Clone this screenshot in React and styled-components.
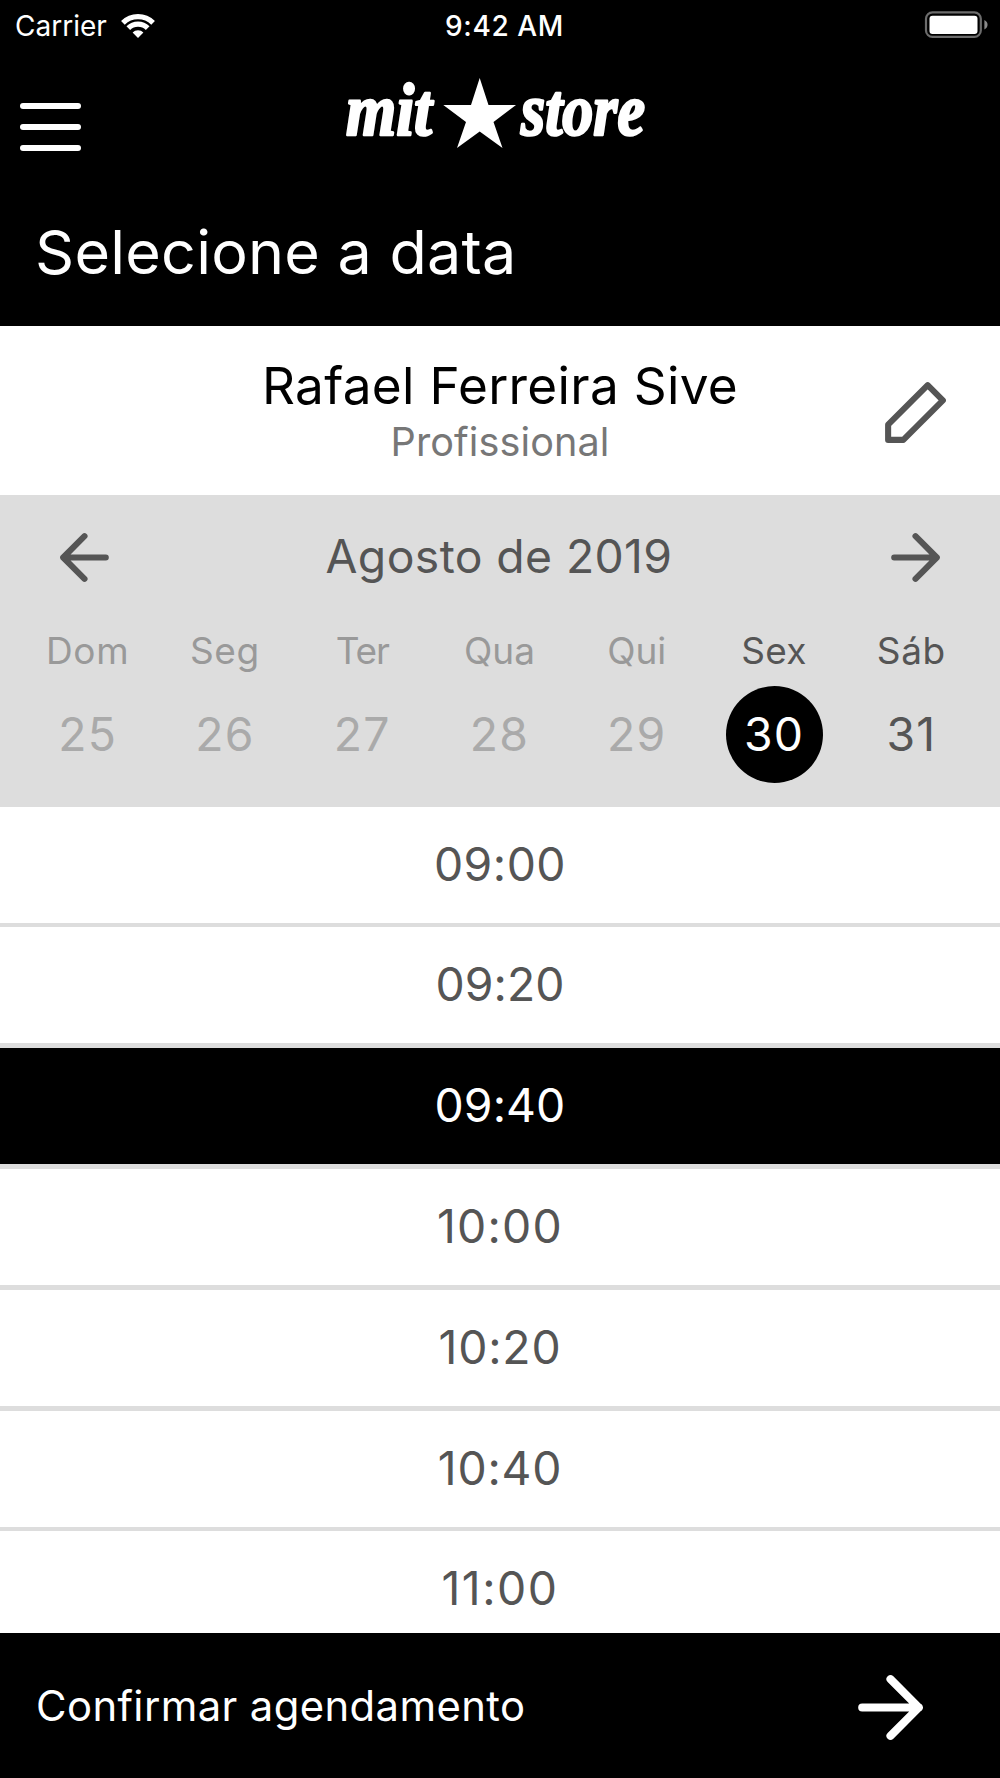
import React, { useState } from 'react'
import styled, { createGlobalStyle } from 'styled-components'

const WEEK = [
  { name: 'Dom', day: 25, disabled: true, tracking: 0.7 },
  { name: 'Seg', day: 26, disabled: true, tracking: 0.6 },
  { name: 'Ter', day: 27, disabled: true, tracking: -1.2 },
  { name: 'Qua', day: 28, disabled: true },
  { name: 'Qui', day: 29, disabled: true },
  { name: 'Sex', day: 30, tracking: 0.3 },
  { name: 'Sáb', day: 31, tracking: 0.7 }
]

const SLOTS = [
  { time: '09:00', tracking: 0.5 },
  { time: '09:20', tracking: 0.1 },
  { time: '09:40', tracking: 0.1 },
  { time: '10:00', tracking: 1.2 },
  { time: '10:20', tracking: 0.8 },
  { time: '10:40', tracking: 0.8 },
  { time: '11:00', tracking: 1.5 }
]

const Arrow = ({ left }) => (
  <path d={left ? 'M19 12H5M12 19l-7-7 7-7' : 'M5 12h14M12 5l7 7-7 7'} />
)

const Wifi = () => (
  <svg width='36' height='26' viewBox='0 0 36 26'>
    <g fill='none' stroke='white' strokeWidth='5.2'>
      <path d='M2.9 9.8A21.4 21.4 0 0 1 33.1 9.8' />
      <path d='M8.3 15.2A13.7 13.7 0 0 1 27.7 15.2' />
    </g>
    <path d='M18 24.9L12.6 19.5A7.6 7.6 0 0 1 23.4 19.5Z' fill='white' />
  </svg>
)

const Battery = () => (
  <svg width='64' height='28' viewBox='0 0 64 28'>
    <rect x='2' y='1.3' width='54.8' height='24.6' rx='6.5' fill='none' stroke='#6c6c6c' strokeWidth='2.2' />
    <rect x='5.5' y='4.8' width='48' height='18.2' rx='3' fill='white' />
    <path d='M60.400 9c4.200 2 4.200 7.400 0 9.400z' fill='#8a8a8a' />
  </svg>
)

const Logo = () => (
  <svg width='330' height='110' viewBox='-10 -14 330 110'>
    <LogoText x='6' y='60.500' textLength='86' lengthAdjust='spacingAndGlyphs'>mit</LogoText>
    <path d='M139.700 4l8.800 27h27.500l-22.500 17 9 26-22.800-16.500L117 74l9-26-22.700-17H131z' fill='white' />
    <LogoText x='181' y='60.500' textLength='124' lengthAdjust='spacingAndGlyphs'>store</LogoText>
  </svg>
)

const App = () => {
  const [day, setDay] = useState(30)
  const [slot, setSlot] = useState('09:40')

  return (
    <Screen>
      <GlobalStyle />
      <Header>
        <StatusBar>
          <Carrier>
            Carrier
            <Wifi />
          </Carrier>
          <Clock>9:42 AM</Clock>
          <Battery />
        </StatusBar>
        <NavBar>
          <Menu aria-label='Menu'>
            <MenuLine />
            <MenuLine />
            <MenuLine />
          </Menu>
          <Logo />
        </NavBar>
        <Title>Selecione a data</Title>
      </Header>

      <Professional>
        <Side />
        <Info>
          <Name>Rafael Ferreira Sive</Name>
          <Role>Profissional</Role>
        </Info>
        <Side>
          <Icon size='73'>
            <path d='M16 3l5 5L8 21H3v-5z' />
          </Icon>
        </Side>
      </Professional>

      <Calendar>
        <MonthBar>
          <Icon size='73'>
            <Arrow left />
          </Icon>
          <Month>Agosto de 2019</Month>
          <Icon size='73'>
            <Arrow />
          </Icon>
        </MonthBar>
        <Week>
          {WEEK.map(item => (
            <Day key={item.name} onClick={() => !item.disabled && setDay(item.day)}>
              <WeekDay $disabled={item.disabled} $tracking={item.tracking}>
                {item.name}
              </WeekDay>
              <DayNumber $disabled={item.disabled} $active={item.day === day}>
                {item.day}
              </DayNumber>
            </Day>
          ))}
        </Week>
      </Calendar>

      <Slots>
        {SLOTS.map(({ time, tracking }) => (
          <Slot key={time} $active={time === slot} $tracking={tracking} onClick={() => setSlot(time)}>
            {time}
          </Slot>
        ))}
      </Slots>

      <Footer>
        Confirmar agendamento
        <Icon size='97' color='white'>
          <Arrow />
        </Icon>
      </Footer>
    </Screen>
  )
}

const GlobalStyle = createGlobalStyle`
  body {
    margin: 0;
    background-color: white;
    font-family: Inter, sans-serif;
  }
  svg {
    display: block;
    flex-shrink: 0;
  }
`
const Screen = styled.div`
  display: flex;
  flex-direction: column;
  width: 1000px;
  height: 1778px;
  overflow: hidden;
`
const Icon = styled.svg.attrs(({ size }) => ({ width: size, height: size, viewBox: '0 0 24 24' }))`
  fill: none;
  stroke: ${({ color }) => color || '#555'};
  stroke-width: 2;
  stroke-linecap: round;
  stroke-linejoin: round;
`
const LogoText = styled.text`
  font-family: 'Liberation Serif', serif;
  font-size: 73px;
  font-weight: bold;
  font-style: italic;
  fill: white;
  stroke: white;
  stroke-width: 2.6px;
  stroke-linejoin: round;
`
const Header = styled.header`
  flex-shrink: 0;
  height: 326px;
  background-color: black;
  color: white;
`
const StatusBar = styled.div`
  display: grid;
  grid-template-columns: 1fr auto 1fr;
  align-items: center;
  height: 50px;
  padding: 0 12px 0 15px;
  font-size: 28px;
  line-height: 34px;
  svg:last-child {
    justify-self: end;
  }
`
const Carrier = styled.div`
  display: flex;
  align-items: center;
  gap: 13px;
  padding-top: 1px;
`
const Clock = styled.div`
  padding: 1px 0 0 6px;
  font-weight: 500;
  letter-spacing: 0.6px;
`
const NavBar = styled.nav`
  display: grid;
  grid-template-columns: 1fr auto 1fr;
  height: 130px;
  padding: 10px 30px 0 20px;
  box-sizing: border-box;
`
const Menu = styled.button`
  display: flex;
  flex-direction: column;
  gap: 15px;
  width: 61px;
  margin: 43px 0 0;
  padding: 0;
  border: none;
  background: none;
`
const MenuLine = styled.span`
  width: 61px;
  height: 6px;
  border-radius: 3px;
  background-color: white;
`
const Title = styled.h1`
  margin: 0;
  padding-left: 35px;
  font-size: 61px;
  font-weight: 400;
  line-height: 144px;
  letter-spacing: 0.25px;
`
const Professional = styled.section`
  display: grid;
  grid-template-columns: 1fr auto 1fr;
  flex-shrink: 0;
  height: 169px;
  padding: 0 48px;
  box-sizing: border-box;
  text-align: center;
`
const Side = styled.div`
  display: flex;
  align-items: center;
  justify-content: flex-end;
  padding-top: 4px;
`
const Info = styled.div`
  padding-top: 31px;
  line-height: 57px;
`
const Name = styled.div`
  color: black;
  font-size: 51.3px;
  letter-spacing: 0.3px;
`
const Role = styled.div`
  color: #777;
  font-size: 39.6px;
  letter-spacing: 0.1px;
`
const Calendar = styled.section`
  flex-shrink: 0;
  height: 311.600px;
  background-color: #ddd;
`
const MonthBar = styled.div`
  display: flex;
  align-items: center;
  justify-content: space-between;
  height: 125.400px;
  padding: 0 48px;
`
const Month = styled.div`
  padding: 0 2px 4px 0;
  color: #555;
  font-size: 46.3px;
  letter-spacing: 0.4px;
`
const Week = styled.div`
  display: grid;
  grid-template-columns: repeat(7, 1fr);
  padding: 0 20px 0 19px;
`
const Day = styled.div`
  display: flex;
  flex-direction: column;
  align-items: center;
  gap: 4.600px;
`
const WeekDay = styled.div`
  padding-top: 1px;
  color: ${({ $disabled }) => ($disabled ? '#999' : '#555')};
  font-size: 37px;
  line-height: 60px;
  letter-spacing: ${({ $tracking = 0 }) => $tracking}px;
`
const DayNumber = styled.div`
  width: 97px;
  height: 97px;
  border-radius: 50%;
  background-color: ${({ $active }) => ($active ? 'black' : 'transparent')};
  color: ${({ $active, $disabled }) => ($active ? 'white' : $disabled ? '#aaa' : '#555')};
  font-size: 46.3px;
  line-height: 96px;
  letter-spacing: 1.2px;
  text-align: center;
`
const Slots = styled.div`
  display: flex;
  flex: 1;
  flex-direction: column;
  gap: 4.800px;
  min-height: 0;
  overflow: hidden;
  background-color: #ddd;
`
const Slot = styled.div`
  flex-shrink: 0;
  height: 116px;
  background-color: ${({ $active }) => ($active ? 'black' : 'white')};
  color: ${({ $active }) => ($active ? 'white' : '#555')};
  font-size: 46.3px;
  font-feature-settings: 'calt' 0;
  line-height: 114px;
  letter-spacing: ${({ $tracking }) => $tracking}px;
  text-align: center;
`
const Footer = styled.footer`
  display: flex;
  align-items: center;
  justify-content: space-between;
  flex-shrink: 0;
  height: 145px;
  padding: 0 61px 0 36px;
  box-sizing: border-box;
  background-color: black;
  color: white;
  font-size: 41.8px;
  letter-spacing: 0.4px;
  svg {
    margin-top: 3px;
  }
`

export default App
